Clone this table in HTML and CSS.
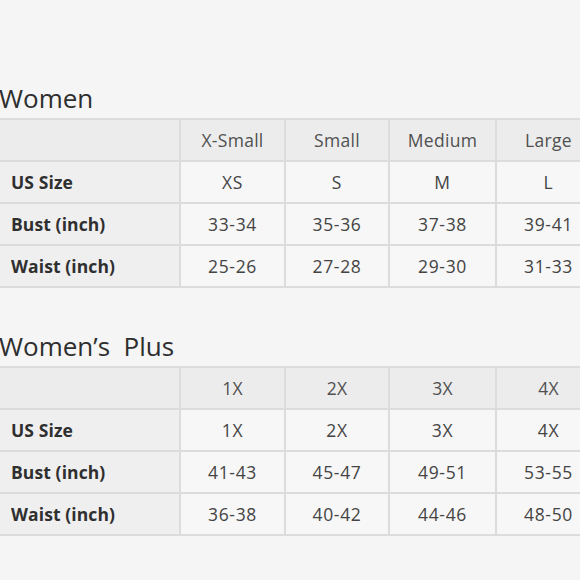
FILE: index.html
```html
<!DOCTYPE html>
<html>
<head>
<meta charset="utf-8">
<link rel="stylesheet" href="styles.css">
</head>
<body>
<div class="page">
  <section class="chart">
    <h2 class="title">Women</h2>
    <table class="sizes">
      <colgroup>
        <col class="c-label"><col class="c-a"><col class="c-b"><col class="c-c"><col class="c-d">
      </colgroup>
      <tr class="head"><td></td><td>X-Small</td><td>Small</td><td>Medium</td><td>Large</td></tr>
      <tr><th>US Size</th><td>XS</td><td>S</td><td>M</td><td>L</td></tr>
      <tr><th>Bust (inch)</th><td>33-34</td><td>35-36</td><td>37-38</td><td>39-41</td></tr>
      <tr><th>Waist (inch)</th><td>25-26</td><td>27-28</td><td>29-30</td><td>31-33</td></tr>
    </table>
  </section>
  <section class="chart plus">
    <h2 class="title">Women’s&nbsp; Plus</h2>
    <table class="sizes">
      <colgroup>
        <col class="c-label"><col class="c-a"><col class="c-b"><col class="c-c"><col class="c-d">
      </colgroup>
      <tr class="head"><td></td><td>1X</td><td>2X</td><td>3X</td><td>4X</td></tr>
      <tr><th>US Size</th><td>1X</td><td>2X</td><td>3X</td><td>4X</td></tr>
      <tr><th>Bust (inch)</th><td>41-43</td><td>45-47</td><td>49-51</td><td>53-55</td></tr>
      <tr><th>Waist (inch)</th><td>36-38</td><td>40-42</td><td>44-46</td><td>48-50</td></tr>
    </table>
  </section>
</div>
</body>
</html>
```

FILE: styles.css
```css
html, body {
  margin: 0;
  padding: 0;
  background: #f5f5f5;
  overflow: hidden;
}
.page {
  width: 580px;
  height: 580px;
  overflow: hidden;
  padding-top: 83px;
  box-sizing: border-box;
  font-family: "Open Sans", "Noto Sans", sans-serif;
  color: #3a3a3a;
}
.chart {
  display: flex;
  flex-direction: column;
}
.plus {
  margin-top: 43px;
}
.title {
  margin: 0 0 5px -1px;
  font-size: 26px;
  line-height: 30px;
  font-weight: 400;
  color: #2e2e2e;
}
.sizes {
  border-collapse: collapse;
  table-layout: fixed;
  width: 602px;
  margin-left: -2px;
}
.c-label { width: 181px; }
.c-a { width: 105px; }
.c-b { width: 104px; }
.c-c { width: 107px; }
.c-d { width: 105px; }
.sizes td, .sizes th {
  border: 2px solid #dcdcdc;
  height: 40px;
  padding: 0;
  font-size: 17.5px;
  text-align: center;
  vertical-align: middle;
  background: #f7f7f7;
  color: #444;
  letter-spacing: 0.7px;
}
.sizes th {
  text-align: left;
  padding-left: 11px;
  font-weight: 700;
  color: #2f2f2f;
  background: #efefef;
  letter-spacing: 0.1px;
}
.sizes .head td {
  background: #ececec;
  color: #505050;
  letter-spacing: 0.3px;
}
```
